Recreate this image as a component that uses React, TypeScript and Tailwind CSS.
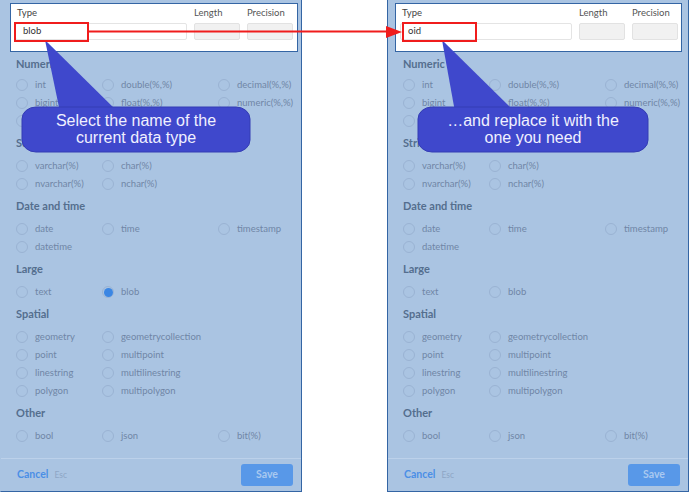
import React from "react"

type Row = string[]
type Section = { title: string; rows: Row[] }

const sections: Section[] = [
  {
    title: "Numeric",
    rows: [
      ["int", "double(%,%)", "decimal(%,%)"],
      ["bigint", "float(%,%)", "numeric(%,%)"],
      ["smallint", "real"],
    ],
  },
  { title: "String", rows: [["varchar(%)", "char(%)"], ["nvarchar(%)", "nchar(%)"]] },
  { title: "Date and time", rows: [["date", "time", "timestamp"], ["datetime"]] },
  { title: "Large", rows: [["text", "blob"]] },
  {
    title: "Spatial",
    rows: [
      ["geometry", "geometrycollection"],
      ["point", "multipoint"],
      ["linestring", "multilinestring"],
      ["polygon", "multipolygon"],
    ],
  },
  { title: "Other", rows: [["bool", "json", "bit(%)"]] },
]

function Radio({ label, checked }: { label: string; checked?: boolean }) {
  return (
    <div className="flex items-center gap-[7px]">
      <span className="w-[12px] h-[12px] rounded-full border border-[#9ab3d3] flex items-center justify-center">
        {checked && <span className="w-[9px] h-[9px] rounded-full bg-[#3b86e3]" />}
      </span>
      <span className="text-[9.5px] text-[#7086a6]">{label}</span>
    </div>
  )
}

function Panel({
  value,
  checked,
  boxClass,
  edgeClass,
}: {
  value: string
  checked?: string
  boxClass: string
  edgeClass: string
}) {
  return (
    <div
      className={`w-[302px] h-[492px] bg-[#aac4e2] border-r border-b border-l border-[#3465a4] flex flex-col font-['Lato',sans-serif] ${edgeClass}`}
    >
      {/* top part, left un-dimmed */}
      <div className={`mt-[3px] h-[49px] bg-white border border-[#3465a4] ${boxClass}`}>
        <div className="grid grid-cols-[172px_46px_46px] gap-x-[7px] pl-[4px] pt-[1px]">
          <span className="h-[15px] leading-[15px] text-[9.5px] text-[#444] pl-[2px]">Type</span>
          <span className="h-[15px] leading-[15px] text-[9.5px] text-[#555]">Length</span>
          <span className="h-[15px] leading-[15px] text-[9.5px] text-[#555]">Precision</span>
          <div className="mt-[3px] h-[17px] border border-[#e4e4e4] rounded-[2px] bg-white flex items-center pl-[7px] text-[9.5px] text-[#333]">
            {value}
          </div>
          <div className="mt-[3px] h-[17px] border border-[#e2e2e2] rounded-[2px] bg-[#f1f1f1]" />
          <div className="mt-[3px] h-[17px] border border-[#e2e2e2] rounded-[2px] bg-[#f1f1f1]" />
        </div>
      </div>

      <div className="pl-[15px]">
        {sections.map((s, i) => (
          <div key={s.title}>
            <div
              className={`${i === 0 ? "h-[24px]" : "h-[27px]"} flex items-center text-[11px] font-bold text-[#546e8e]`}
            >
              {s.title}
            </div>
            {s.rows.map((r, j) => (
              <div key={j} className="grid grid-cols-[86px_116px_1fr] h-[18px] items-center">
                {r.map((l) => (
                  <Radio key={l} label={l} checked={checked === l} />
                ))}
              </div>
            ))}
          </div>
        ))}
      </div>

      <div className="flex-1" />
      <div className="h-[33px] border-t border-[#bcd1ea] flex items-center justify-between pl-[16px] pr-[8px]">
        <div className="flex items-baseline gap-[6px]">
          <span className="text-[10.5px] font-bold text-[#4a8fe6]">Cancel</span>
          <span className="text-[8.5px] text-[#8ea6c5]">Esc</span>
        </div>
        <div className="w-[52px] h-[22px] rounded-[3px] bg-[#5898e8] flex items-center justify-center text-[10.5px] font-bold text-[#a9c9f0]">
          Save
        </div>
      </div>
    </div>
  )
}

export default function App() {
  return (
    <div className="relative w-[691px] h-[493px] bg-white overflow-hidden">
      <div className="flex gap-[85px]">
        <Panel value="blob" checked="blob" boxClass="ml-[9px] w-[288px]" edgeClass="border-l-transparent" />
        <Panel value="oid" boxClass="ml-[7px] w-[287px]" edgeClass="" />
      </div>

      {/* annotations */}
      <svg className="absolute left-0 top-0" width={691} height={493} viewBox="0 0 691 493">
        <polygon points="45,40 60,112 118,112" fill="#3f48cc" />
        <rect x={22} y={107} width={228} height={45} rx={14} ry={12} fill="#3f48cc" stroke="#343cb4" />
        <polygon points="442,40 455,112 515,112" fill="#3f48cc" />
        <rect x={418} y={107} width={230} height={45} rx={14} ry={12} fill="#3f48cc" stroke="#343cb4" />
        <rect x={15} y={23} width={73} height={18} fill="none" stroke="#f01c1c" strokeWidth={2} />
        <rect x={403} y={23} width={73} height={18} fill="none" stroke="#f01c1c" strokeWidth={2} />
        <line x1={89} y1={31.5} x2={389} y2={31.5} stroke="#f01c1c" strokeWidth={2} />
        <polygon points="386,26 402,32 386,38" fill="#f01c1c" />
      </svg>
      <div className="absolute left-[22px] top-[106px] w-[228px] h-[45px] flex flex-col items-center justify-center text-[16px] leading-[17px] text-[#f0f0ff] font-['Liberation_Sans',sans-serif]">
        <span>Select the name of the</span>
        <span>current data type</span>
      </div>
      <div className="absolute left-[418px] top-[106px] w-[230px] h-[45px] flex flex-col items-center justify-center text-[16px] leading-[17px] text-[#f0f0ff] font-['Liberation_Sans',sans-serif]">
        <span>…and replace it with the</span>
        <span>one you need</span>
      </div>
    </div>
  )
}
